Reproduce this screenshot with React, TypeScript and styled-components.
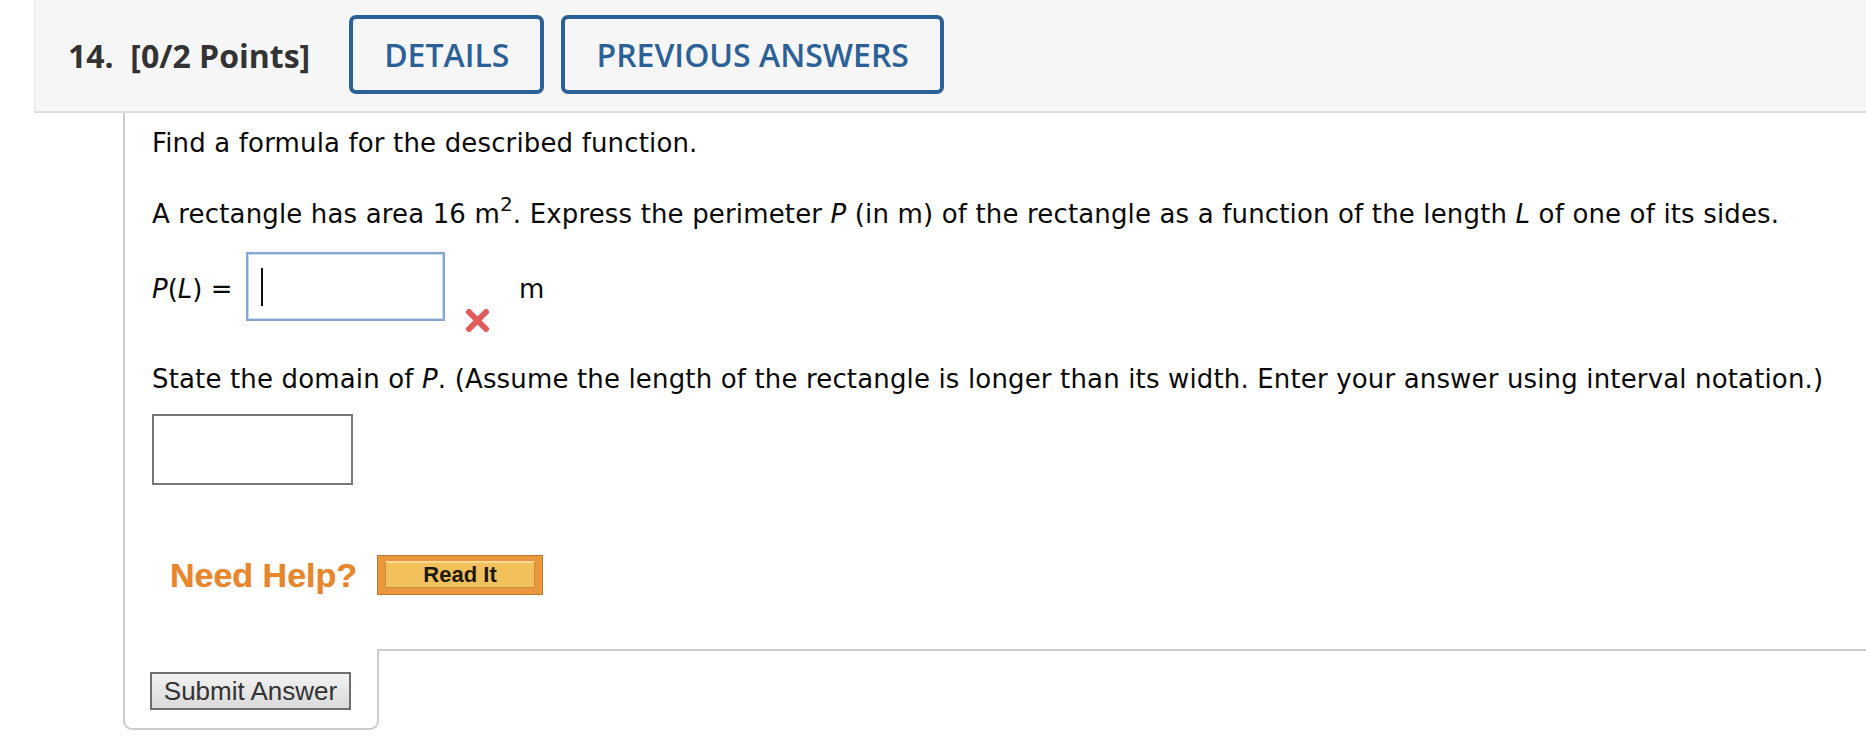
import React from "react";
import styled, { createGlobalStyle } from "styled-components";

const Global = createGlobalStyle`
  html, body { margin: 0; padding: 0; background: #ffffff; }
  body { font-family: "DejaVu Sans", Verdana, sans-serif; }
`;

const Page = styled.div`
  width: 1866px;
  min-height: 750px;
  background: #fff;
  overflow: hidden;
`;

const Header = styled.div`
  margin-left: 34px;
  height: 111px;
  background: #f6f6f6;
  border-bottom: 2px solid #dedede;
  border-left: 1px solid #e6e6e6;
  display: flex;
  align-items: center;
  padding-left: 33px;
  gap: 17px;
`;

const Title = styled.div`
  font-family: "Open Sans", sans-serif;
  font-weight: 700;
  font-size: 32px;
  color: #333;
  margin-right: 22px;
  white-space: pre;
`;

const TabButton = styled.button`
  height: 79px;
  padding: 0 31px;
  border: 4px solid #2b6196;
  border-radius: 7px;
  background: transparent;
  font-family: "Open Sans", sans-serif;
  font-weight: 600;
  font-size: 32px;
  color: #2b6196;
  margin-top: -2px;
`;

const Card = styled.div`
  margin-left: 123px;
  display: flex;
  flex-direction: column;
`;

const Content = styled.div`
  border-left: 2px solid #cccccc;
  padding: 15px 0 0 27px;
  height: 536px;
  box-sizing: border-box;
`;

const Para = styled.p<{ $mt: number }>`
  margin: ${(p) => p.$mt}px 0 0 0;
  font-size: 26px;
  line-height: 30px;
  letter-spacing: 0.15px;
  color: #0a0a0a;
  white-space: nowrap;
`;

const Sup = styled.sup`
  font-size: 20px;
  line-height: 0;
  position: relative;
  top: -2px;
`;

const AnswerRow = styled.div`
  display: flex;
  align-items: flex-start;
  margin-top: 23px;
`;

const RowLabel = styled.span`
  font-size: 26px;
  line-height: 30px;
  margin-top: 22px;
  color: #0a0a0a;
  width: 94px;
  white-space: pre;
`;

const MathInput = styled.div`
  width: 199px;
  height: 69px;
  box-sizing: border-box;
  border: 2px solid #86a6cf;
  box-shadow: inset 0 0 0 1px #c9d9ee;
  background: #fff;
  display: flex;
  align-items: center;
  padding-left: 13px;
`;

const Caret = styled.div`
  width: 2px;
  height: 38px;
  background: #111;
`;

const WrongMark = styled.svg`
  margin: 56px 0 0 19px;
  filter: blur(0.5px);
`;

const Unit = styled.span`
  font-size: 26px;
  line-height: 30px;
  margin: 22px 0 0 28px;
  color: #0a0a0a;
`;

const PlainInput = styled.div`
  width: 201px;
  height: 71px;
  box-sizing: border-box;
  border: 2px solid #777;
  margin-top: 20px;
  background: #fff;
`;

const HelpRow = styled.div`
  display: flex;
  align-items: center;
  gap: 20px;
  margin: 70px 0 0 18px;
`;

const HelpText = styled.span`
  font-family: "Liberation Sans", Arial, sans-serif;
  font-weight: 700;
  font-size: 34px;
  color: #e8862e;
  text-shadow: 0 0 1px rgba(232, 134, 46, 0.6);
`;

const ReadIt = styled.div`
  width: 166px;
  height: 40px;
  box-sizing: border-box;
  background: #ea973c;
  border: 1px solid #b97a36;
  padding: 5px 7px 6px 7px;
  display: flex;
`;

const ReadItInner = styled.div`
  flex: 1;
  background: #f3c15b;
  border: 1px solid #c8903f;
  border-top-color: #f8dca6;
  box-shadow: inset 0 1px 0 #f7d489;
  display: flex;
  align-items: center;
  justify-content: center;
  font-family: "Liberation Sans", Arial, sans-serif;
  font-weight: 700;
  font-size: 22px;
  color: #1f1a10;
`;

const Footer = styled.div`
  display: flex;
  height: 81px;
`;

const FooterLeft = styled.div`
  width: 256px;
  box-sizing: border-box;
  border: 2px solid #cccccc;
  border-top: none;
  border-radius: 0 0 9px 9px;
  padding: 23px 0 0 25px;
`;

const FooterRest = styled.div`
  flex: 1;
  border-top: 2px solid #cccccc;
`;

const SubmitButton = styled.button`
  width: 201px;
  height: 38px;
  box-sizing: border-box;
  border: 2px solid #6e6e6e;
  background: linear-gradient(#f2f2f2, #dadada);
  font-family: "Liberation Sans", Arial, sans-serif;
  font-size: 26px;
  color: #333;
  padding: 0;
`;

export default function App() {
  return (
    <Page>
      <Global />
      <Header>
        <Title>{"14.  [0/2 Points]"}</Title>
        <TabButton>DETAILS</TabButton>
        <TabButton>PREVIOUS ANSWERS</TabButton>
      </Header>
      <Card>
        <Content>
          <Para $mt={0}>Find a formula for the described function.</Para>
          <Para $mt={41}>
            A rectangle has area 16 m<Sup>2</Sup>. Express the perimeter <i>P</i> (in m) of the
            rectangle as a function of the length <i>L</i> of one of its sides.
          </Para>
          <AnswerRow>
            <RowLabel>
              <i>P</i>(<i>L</i>) =
            </RowLabel>
            <MathInput>
              <Caret />
            </MathInput>
            <WrongMark width="27" height="25" viewBox="0 0 27 25">
              <path
                d="M5 4 L22 21 M22 4 L5 21"
                stroke="#e25b5b"
                strokeWidth="6"
                strokeLinecap="round"
              />
            </WrongMark>
            <Unit>m</Unit>
          </AnswerRow>
          <Para $mt={31}>
            State the domain of <i>P</i>. (Assume the length of the rectangle is longer than its
            width. Enter your answer using interval notation.)
          </Para>
          <PlainInput />
          <HelpRow>
            <HelpText>Need Help?</HelpText>
            <ReadIt>
              <ReadItInner>Read It</ReadItInner>
            </ReadIt>
          </HelpRow>
        </Content>
        <Footer>
          <FooterLeft>
            <SubmitButton>Submit Answer</SubmitButton>
          </FooterLeft>
          <FooterRest />
        </Footer>
      </Card>
    </Page>
  );
}
